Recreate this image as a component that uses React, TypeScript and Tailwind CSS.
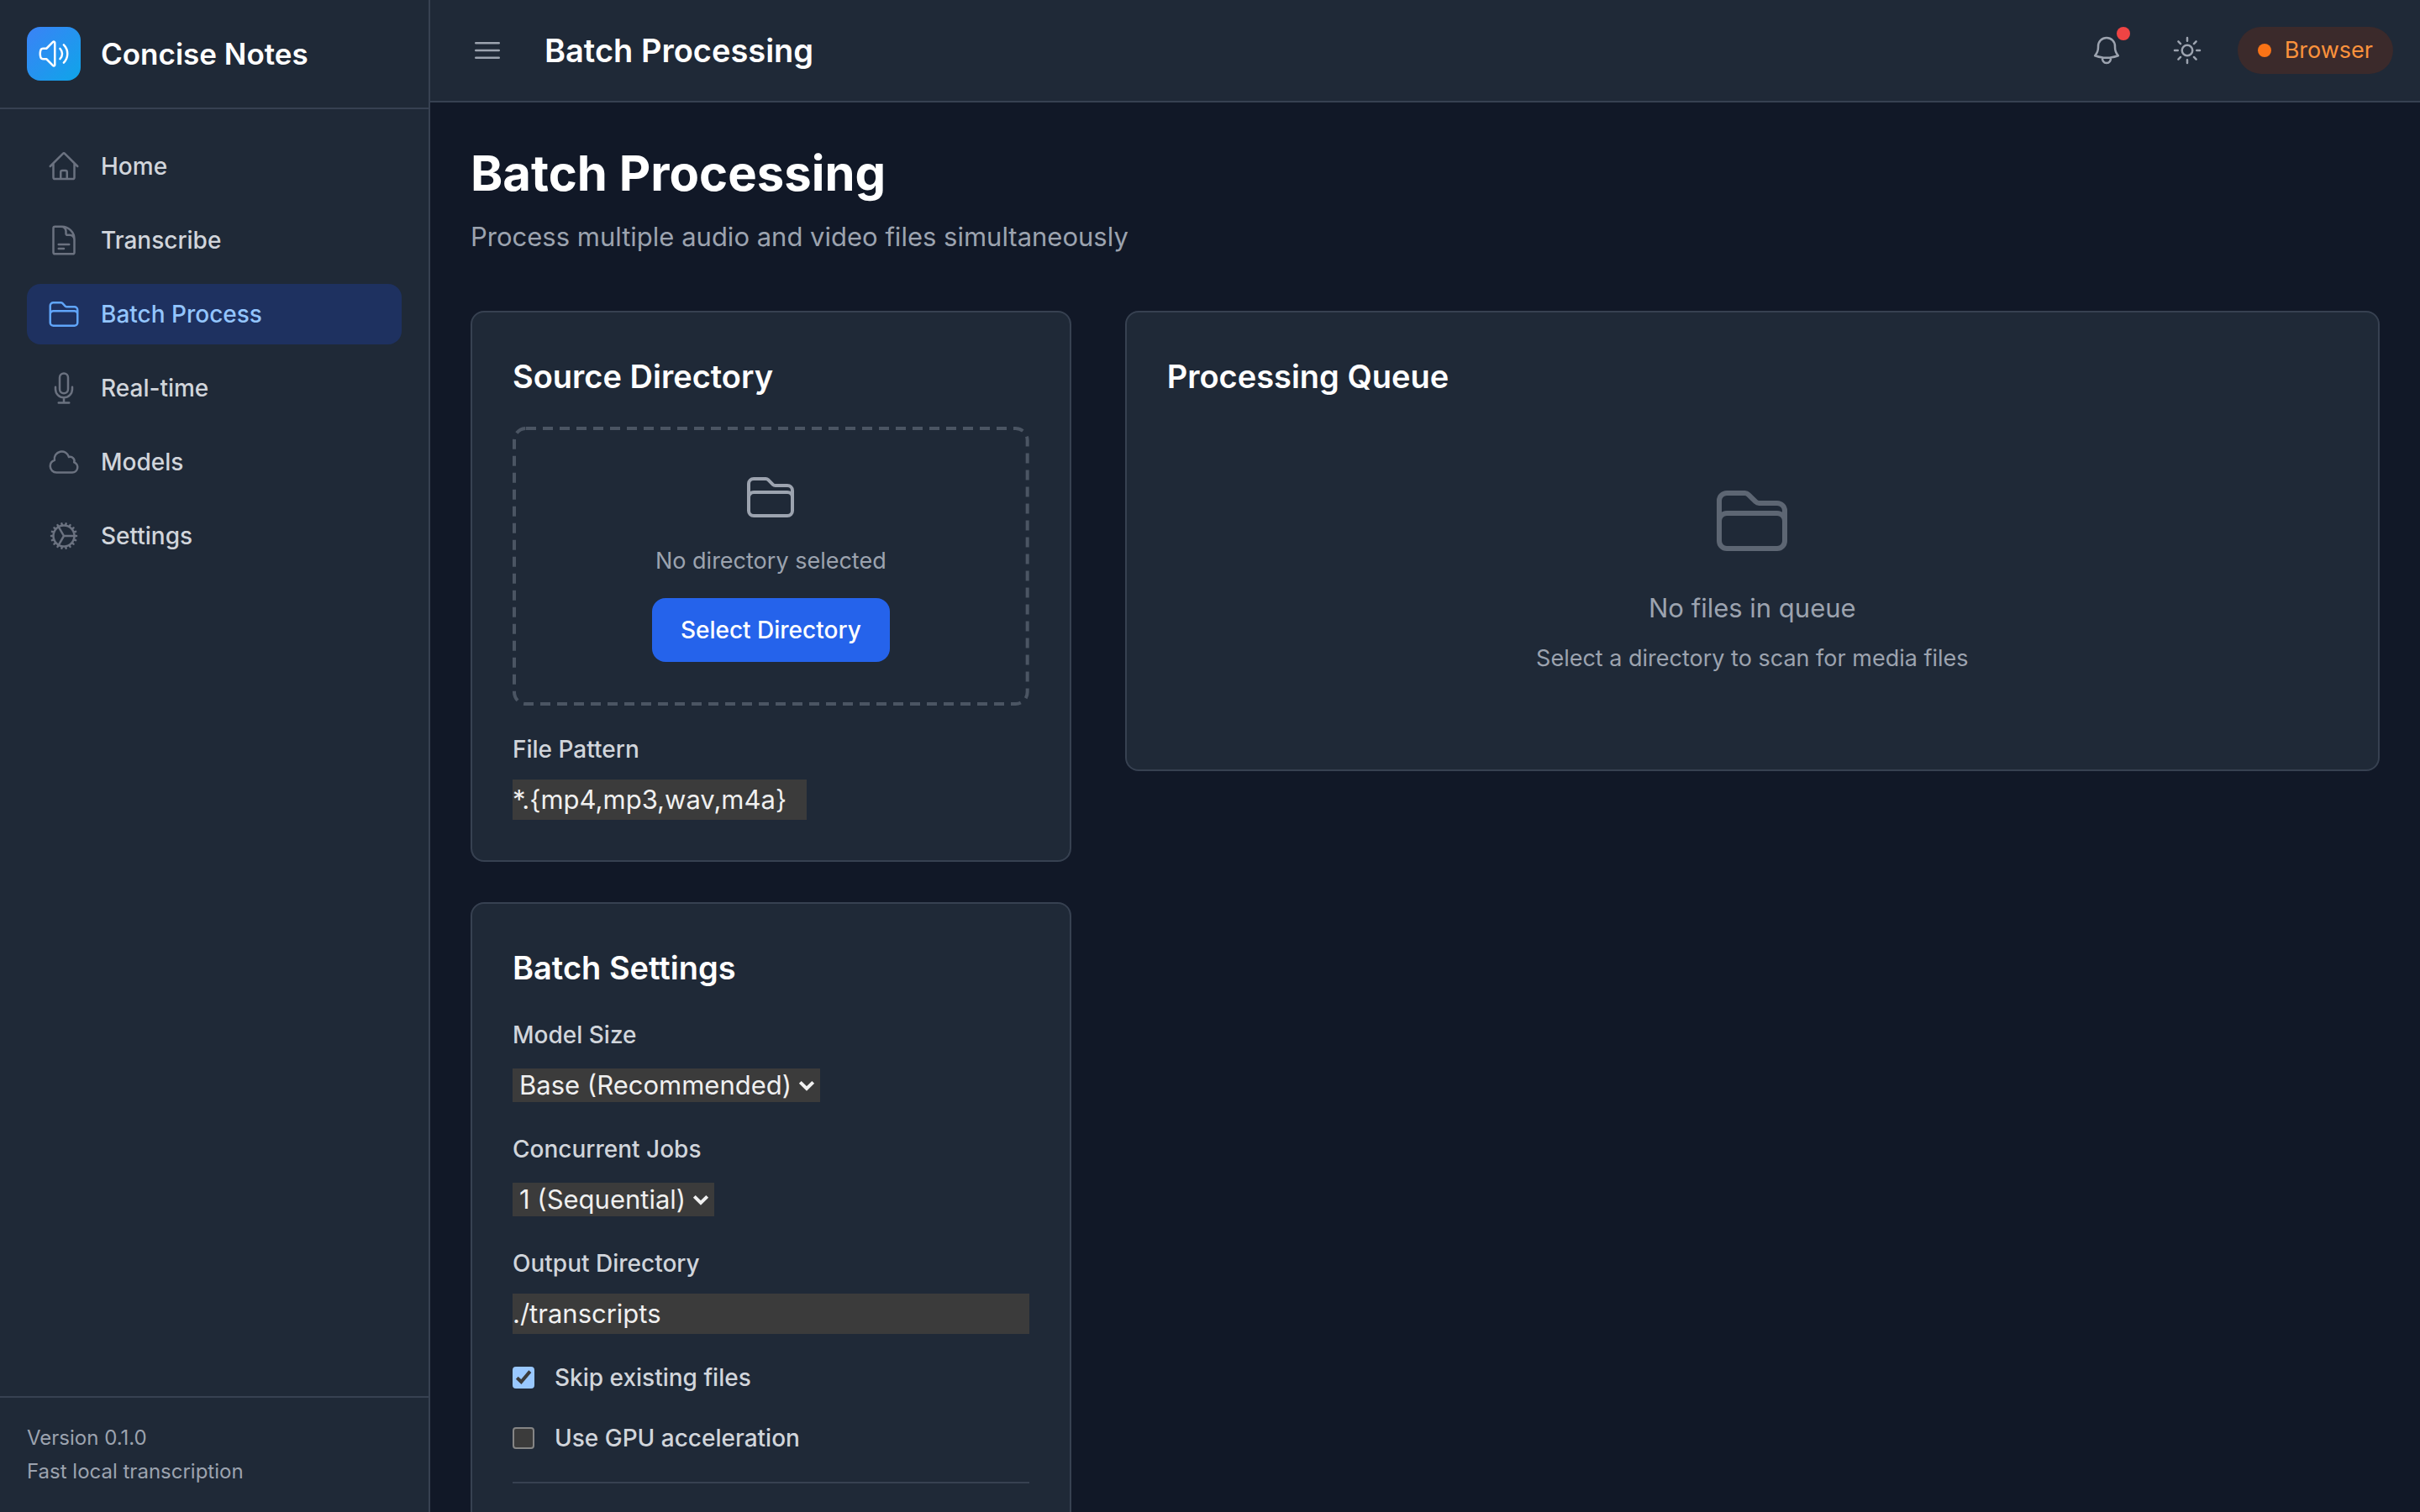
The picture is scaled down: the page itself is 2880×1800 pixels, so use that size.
import { useState } from "react";
import type { ReactNode } from "react";
import type { IconType } from "react-icons";
import {
  HiOutlineBars3,
  HiOutlineBell,
  HiOutlineCloud,
  HiOutlineCog,
  HiOutlineDocumentText,
  HiOutlineFolder,
  HiOutlineHome,
  HiOutlineMicrophone,
  HiOutlineSpeakerWave,
  HiOutlineSun,
} from "react-icons/hi2";

const navItems: { label: string; icon: IconType; active?: boolean }[] = [
  { label: "Home", icon: HiOutlineHome },
  { label: "Transcribe", icon: HiOutlineDocumentText },
  { label: "Batch Process", icon: HiOutlineFolder, active: true },
  { label: "Real-time", icon: HiOutlineMicrophone },
  { label: "Models", icon: HiOutlineCloud },
  { label: "Settings", icon: HiOutlineCog },
];

function Sidebar() {
  return (
    <aside className="flex w-[512px] shrink-0 flex-col border-r-2 border-[#374151] bg-[#1f2937]">
      <div className="flex items-center gap-6 border-b-2 border-[#374151] p-8">
        <div className="flex size-16 items-center justify-center rounded-2xl bg-linear-to-br/srgb from-[#3b82f6] to-[#0ea5e9]">
          <HiOutlineSpeakerWave className="size-10 text-white" />
        </div>
        <span className="text-[35px] leading-[56px] font-semibold text-white">Concise Notes</span>
      </div>
      <nav className="flex flex-1 flex-col gap-4 p-8">
        {navItems.map(({ label, icon: Icon, active }) => (
          <a
            key={label}
            href="#"
            aria-current={active ? "page" : undefined}
            className={
              active
                ? "flex items-center gap-6 rounded-2xl bg-[#1e3160] px-6 py-4 text-[28px] leading-10 font-medium text-[#93c5fd]"
                : "flex items-center gap-6 rounded-2xl px-6 py-4 text-[28px] leading-10 font-medium text-[#d1d5db]"
            }
          >
            <Icon className={active ? "size-10 text-[#60a5fa]" : "size-10 text-[#6b7280]"} />
            {label}
          </a>
        ))}
      </nav>
      <div className="flex flex-col gap-2 border-t-2 border-[#374151] p-8 text-2xl text-[#9ca3af]">
        <p>Version 0.1.0</p>
        <p>Fast local transcription</p>
      </div>
    </aside>
  );
}

function Header() {
  return (
    <header className="flex items-center justify-between border-b-2 border-[#374151] bg-[#1f2937] px-8 py-6">
      <div className="flex items-center gap-8">
        <button type="button" aria-label="Toggle sidebar" className="p-4 text-[#9ca3af]">
          <HiOutlineBars3 className="size-10" />
        </button>
        <span className="text-[38px] leading-[56px] font-semibold text-white">Batch Processing</span>
      </div>
      <div className="flex items-center gap-6">
        <button type="button" aria-label="Notifications" className="relative p-4 text-[#9ca3af]">
          <HiOutlineBell className="size-10" />
          <span className="absolute top-2 right-2 size-4 rounded-full bg-[#ef4444]" />
        </button>
        <button type="button" aria-label="Toggle theme" className="p-4 text-[#9ca3af]">
          <HiOutlineSun className="size-10" />
        </button>
        <div className="flex items-center gap-4 rounded-full bg-[#3b2a2b] px-6 py-2 text-[27px] leading-10 text-[#fb923c]">
          <span className="size-4 rounded-full bg-[#f97316]" />
          Browser
        </div>
      </div>
    </header>
  );
}

function Card({ title, children }: { title: string; children: ReactNode }) {
  return (
    <section className="flex flex-col gap-8 rounded-2xl border-2 border-[#374151] bg-[#1f2937] p-12">
      <h2 className="text-[38px] leading-[56px] font-semibold text-white">{title}</h2>
      {children}
    </section>
  );
}

function Field({ id, label, children }: { id: string; label: string; children: ReactNode }) {
  return (
    <div className="flex flex-col items-start gap-4">
      <label htmlFor={id} className="text-[28px] leading-10 font-medium text-[#d1d5db]">
        {label}
      </label>
      {children}
    </div>
  );
}

function Select({ id, options, width }: { id: string; options: string[]; width: string }) {
  return (
    <div className={`relative my-1 max-w-full ${width}`}>
      <select
        id={id}
        className="block h-10 w-full appearance-none bg-[#3b3b3b] pl-2 text-[31px] leading-10 text-[#f0f0f0]"
      >
        {options.map((option) => (
          <option key={option}>{option}</option>
        ))}
      </select>
      <svg
        viewBox="0 0 20 14"
        className="pointer-events-none absolute top-3.5 right-1.5 h-3.5 w-5"
        fill="none"
        stroke="#f0f0f0"
        strokeWidth="4"
      >
        <path d="M2.3 2.3 10 10l7.7-7.7" />
      </svg>
    </div>
  );
}

function Checkbox({ label, initial }: { label: string; initial: boolean }) {
  const [checked, setChecked] = useState(initial);
  return (
    <label className="flex items-center gap-6 text-[28px] leading-10 font-medium text-[#d1d5db]">
      <span className="relative size-[26px]">
        <input
          type="checkbox"
          checked={checked}
          onChange={(event) => setChecked(event.target.checked)}
          className="block size-[26px] appearance-none rounded-[4px] border-2 border-[#858585] bg-[#3b3b3b] checked:border-[#99c8ff] checked:bg-[#99c8ff]"
        />
        {checked && (
          <svg
            viewBox="0 0 26 26"
            className="pointer-events-none absolute inset-0 size-[26px]"
            fill="none"
            stroke="#3b3b3b"
            strokeWidth="4"
          >
            <path d="M5.3 13.2 10.3 18 20.8 5.6" />
          </svg>
        )}
      </span>
      {label}
    </label>
  );
}

function DashedOutline() {
  return (
    <svg
      aria-hidden="true"
      className="pointer-events-none absolute inset-0 size-full overflow-visible p-0.5"
      fill="none"
      stroke="#4b5563"
      strokeWidth="4"
      strokeDasharray="12 8"
    >
      <rect width="100%" height="100%" rx="14" />
    </svg>
  );
}

function SourceDirectory() {
  return (
    <Card title="Source Directory">
      <div className="relative flex flex-col items-center gap-6 p-[52px]">
        <DashedOutline />
        <HiOutlineFolder className="size-16 text-[#9ca3af]" />
        <p className="text-[27px] leading-10 text-[#9ca3af]">No directory selected</p>
        <button
          type="button"
          className="rounded-2xl border-2 border-transparent bg-[#2563eb] px-8 py-4 text-[28px] leading-10 font-medium text-white"
        >
          Select Directory
        </button>
      </div>
      <Field id="file-pattern" label="File Pattern">
        <input
          id="file-pattern"
          type="text"
          defaultValue="*.{mp4,mp3,wav,m4a}"
          className="h-12 w-[350px] bg-[#3b3b3b] text-[31px] leading-[48px] text-[#f0f0f0]"
        />
      </Field>
    </Card>
  );
}

function BatchSettings() {
  return (
    <Card title="Batch Settings">
      <Field id="model-size" label="Model Size">
        <Select id="model-size" options={["Base (Recommended)"]} width="w-[366px]" />
      </Field>
      <Field id="concurrent-jobs" label="Concurrent Jobs">
        <Select id="concurrent-jobs" options={["1 (Sequential)"]} width="w-[240px]" />
      </Field>
      <Field id="output-directory" label="Output Directory">
        <input
          id="output-directory"
          type="text"
          defaultValue="./transcripts"
          className="h-12 w-full bg-[#3b3b3b] text-[31px] leading-[48px] text-[#f0f0f0]"
        />
      </Field>
      <Checkbox label="Skip existing files" initial={true} />
      <Checkbox label="Use GPU acceleration" initial={false} />
      <div className="border-t-2 border-[#374151] pt-8" />
    </Card>
  );
}

function ProcessingQueue() {
  return (
    <Card title="Processing Queue">
      <div className="flex flex-col items-center py-16 text-[#9ca3af]">
        <HiOutlineFolder className="size-24 opacity-50" />
        <p className="mt-8 text-[31px] leading-[48px]">No files in queue</p>
        <p className="mt-4 text-[27px] leading-10">Select a directory to scan for media files</p>
      </div>
    </Card>
  );
}

export default function App() {
  return (
    <div className="flex h-screen overflow-hidden bg-[#111827] font-['Inter',sans-serif]">
      <Sidebar />
      <div className="flex min-w-0 flex-1 flex-col">
        <Header />
        <main className="flex-1 overflow-hidden p-12">
          <h1 className="text-[58px] leading-[72px] font-bold text-white">Batch Processing</h1>
          <p className="mt-4 text-[31px] leading-[48px] text-[#9ca3af]">
            Process multiple audio and video files simultaneously
          </p>
          <div className="mt-16 grid grid-cols-3 items-start gap-16">
            <div className="flex flex-col gap-12">
              <SourceDirectory />
              <BatchSettings />
            </div>
            <div className="col-span-2">
              <ProcessingQueue />
            </div>
          </div>
        </main>
      </div>
    </div>
  );
}
